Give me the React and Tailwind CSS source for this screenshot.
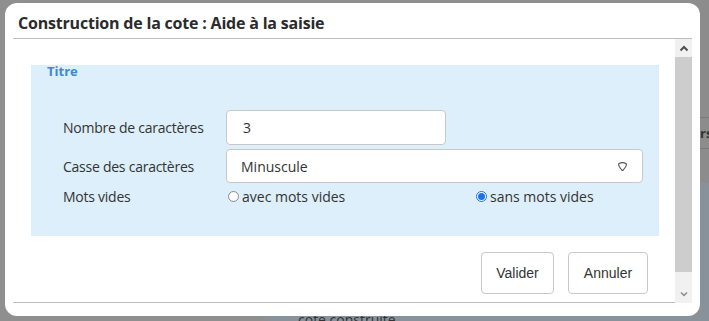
import React from 'react';

function Radio({ checked }) {
  return checked ? (
    <span className="inline-flex h-[11px] w-[11px] items-center justify-center rounded-full border border-[#1a73e8] bg-white">
      <span className="h-[7px] w-[7px] rounded-full bg-[#1a73e8]" />
    </span>
  ) : (
    <span className="inline-block h-[11px] w-[11px] rounded-full border border-[#8a8a8a] bg-white" />
  );
}

function Scrollbar() {
  return (
    <div className="flex w-[17px] flex-col bg-[#f1f1f1]">
      <div className="flex h-[18px] items-center justify-center">
        <svg width="10" height="7" viewBox="0 0 10 7">
          <path d="M1.5 5.5 L5 2 L8.5 5.5" fill="none" stroke="#505050" strokeWidth="2" />
        </svg>
      </div>
      <div className="h-[215px] bg-[#cdcdcd]" />
      <div className="flex-1" />
      <div className="flex h-[18px] items-center justify-center">
        <svg width="8" height="6" viewBox="0 0 8 6">
          <path d="M1 1.5 L4 4.5 L7 1.5" fill="none" stroke="#8a8a8a" strokeWidth="1.5" />
        </svg>
      </div>
    </div>
  );
}

export default function App() {
  return (
    <div className="relative h-[321px] w-[709px] overflow-hidden bg-[#8f8f8f] font-['Open_Sans',sans-serif]">
      {/* page behind the overlay */}
      <div className="absolute right-0 top-0 h-full w-[9px] bg-[#8c8c8c]">
        <div className="h-[118px] border-b border-[#7a7a7a]" />
        <div className="h-[31px] border-b border-[#7a7a7a] text-[13px] font-bold leading-[31px] text-[#333]">rs</div>
        <div className="h-[34px]" />
        <div className="h-full bg-[#87929b]" />
      </div>
      <div className="absolute bottom-0 left-[267px] h-[5px] w-[442px] bg-[#87929b]" />
      <div className="absolute left-[298px] top-[309px] text-[14px] text-[#333]">cote construite</div>

      <div className="relative ml-[5px] mt-[3px] flex h-[313px] w-[695px] flex-col rounded-[12px] bg-white">
        <div className="mx-[8px] flex h-[36px] items-center border-b border-[#bdbdbd] pl-[5px] pt-[5px]">
          <h1 className="text-[16px] font-bold tracking-[-0.2px] text-[#2b2b2b]">Construction de la cote : Aide à la saisie</h1>
        </div>

        <div className="ml-[8px] flex h-[264px] w-[679px]">
          <div className="flex flex-1 flex-col border-b border-[#bdbdbd]">
            <div className="ml-[18px] mr-[16px] mt-[26px] h-[171px] bg-[#ddeffa]">
              <div className="pl-[16px] text-[13px] font-bold leading-[12px] text-[#3b8bd0]">Titre</div>
              <div className="mt-[33px] grid grid-cols-[195px_1fr] items-center pr-[16px] text-[14px] text-[#333]">
                <label className="whitespace-nowrap pl-[32px] tracking-[-0.25px]">Nombre de caractères</label>
                <div className="flex h-[35px] w-[220px] items-center rounded-[4px] border border-[#c8c8c8] bg-white pl-[16px]">3</div>
                <label className="mt-[4px] whitespace-nowrap pl-[32px] tracking-[-0.25px]">Casse des caractères</label>
                <div className="mt-[4px] flex h-[34px] items-center justify-between rounded-[4px] border border-[#c8c8c8] bg-white pl-[14px] pr-[14px]">
                  <span>Minuscule</span>
                  <svg width="11" height="11" viewBox="0 0 11 11">
                    <path d="M2 2.5 Q5.5 0.8 9 2.5 Q10 3.5 8.5 6 L6.3 9 Q5.5 9.8 4.7 9 L2.5 6 Q1 3.5 2 2.5Z" fill="none" stroke="#555" strokeWidth="1.1" />
                  </svg>
                </div>
                <label className="mt-[3px] whitespace-nowrap pl-[32px] tracking-[-0.25px]">Mots vides</label>
                <div className="mt-[3px] flex items-center pl-[2px]">
                  <div className="flex w-[248px] items-center gap-[3px]">
                    <Radio />
                    <span>avec mots vides</span>
                  </div>
                  <div className="flex items-center gap-[3px]">
                    <Radio checked />
                    <span>sans mots vides</span>
                  </div>
                </div>
              </div>
            </div>
            <div className="mr-[27px] mt-[16px] flex justify-end gap-[14px] font-['Liberation_Sans',sans-serif] text-[14px] text-[#333]">
              <button className="h-[42px] w-[73px] rounded-[4px] border border-[#c8c8c8] bg-white">Valider</button>
              <button className="h-[42px] w-[80px] rounded-[4px] border border-[#c8c8c8] bg-white">Annuler</button>
            </div>
          </div>
          <Scrollbar />
        </div>
      </div>
    </div>
  );
}
